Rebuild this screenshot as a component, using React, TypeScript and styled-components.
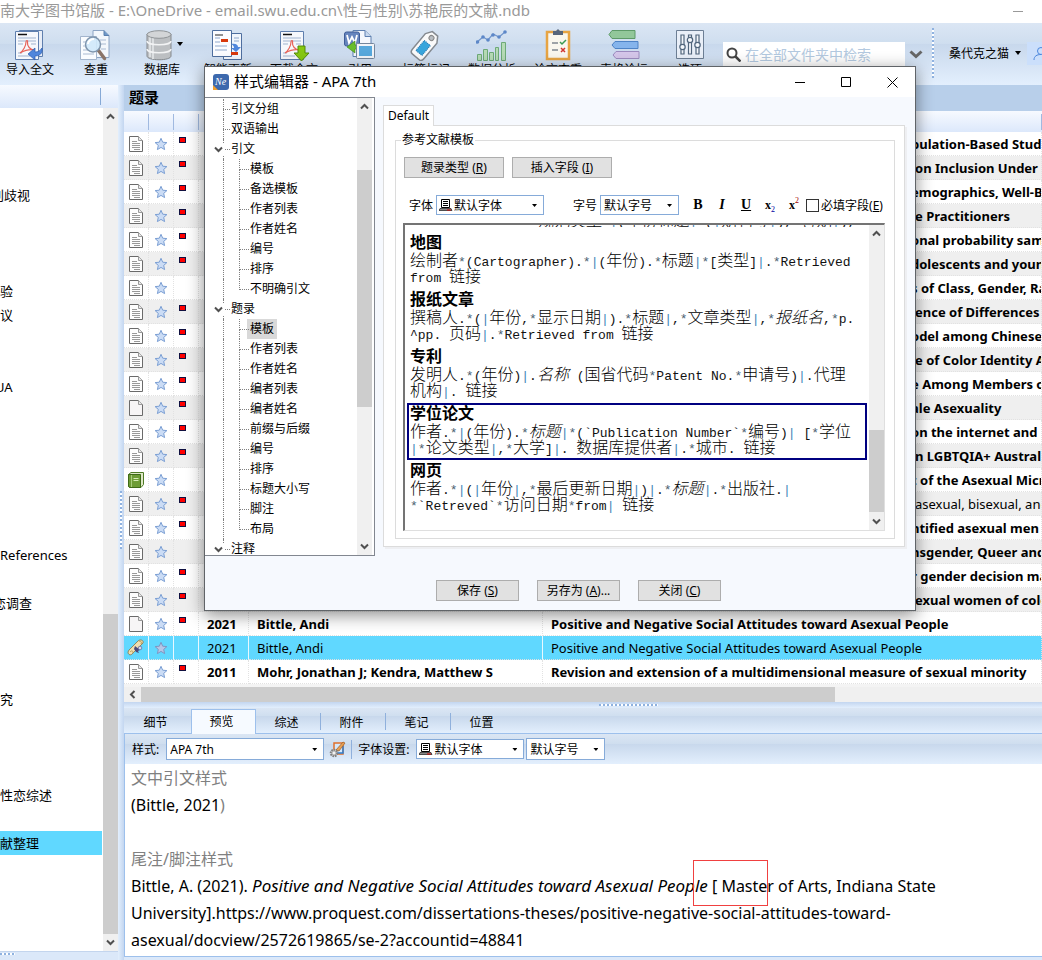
import React from "react";
import styled, { createGlobalStyle, css } from "styled-components";

const ui = `"Noto Sans", "Noto Sans CJK SC", sans-serif`;
const mono = `"Liberation Mono", "Noto Sans CJK SC", monospace`;
const barGradient =
  "linear-gradient(#dbe6f4 0, #cfdeef 33%, #c8d8ec 34%, #e3effd 100%)";
const headGradient = "linear-gradient(#f7faff, #dce8fb)";
const selected = "#60d8ff";

const GlobalStyle = createGlobalStyle`
  * { box-sizing: border-box; }
  body { margin: 0; overflow: hidden; background: #dbe8f9; font-family: ${ui}; font-size: 12px; color: #000; }
  button, select, input { font: inherit; color: inherit; margin: 0; padding: 0; }
  ul { list-style: none; margin: 0; padding: 0; }
`;

const Shell = styled.div`
  position: relative;
  display: flex;
  flex-direction: column;
  height: 100vh;
  overflow: hidden;
`;

/* ---------- window caption ---------- */

const Caption = styled.header`
  display: flex;
  flex: none;
  align-items: center;
  justify-content: space-between;
  height: 23px;
  padding-right: 18px;
  background: #fff;
  color: #999;
  font-size: 15px;
  line-height: 21px;
  white-space: nowrap;
`;

const CaptionText = styled.span`
  height: 23px;
`;

const CaptionDash = styled.button`
  width: 12px;
  height: 12px;
  border: 0;
  background: linear-gradient(#999, #999) center / 10px 1px no-repeat;
`;

/* ---------- main toolbar ---------- */

const Ribbon = styled.nav`
  display: flex;
  flex: none;
  height: 62px;
  background: ${barGradient};
`;

const RibbonGroup = styled.div`
  display: flex;
  flex: none;
  margin-left: -3px;
`;

const RibbonButton = styled.button`
  display: flex;
  flex-direction: column;
  align-items: center;
  width: 66px;
  padding-top: 6px;
  border: 0;
  background: none;
  line-height: 18px;
  white-space: nowrap;
`;

const RibbonArt = styled.span`
  position: relative;
  display: flex;
  height: 32px;
`;

const ArtArrow = styled.span`
  position: absolute;
  left: 31px;
  top: 4px;
`;

const SearchBox = styled.label`
  display: flex;
  flex: none;
  align-items: center;
  gap: 4px;
  width: 182px;
  height: 24px;
  margin: 19px 4px 0 0;
  padding: 0 3px;
  background: #fff;
`;

const SearchInput = styled.input`
  flex: 1;
  min-width: 0;
  border: 0;
  outline: 0;
  background: none;
  font-size: 14px;
  &::placeholder {
    color: #b3c9e0;
    opacity: 1;
  }
`;

const IconButton = styled.button`
  display: flex;
  align-items: center;
  justify-content: center;
  width: 16px;
  height: 24px;
  margin-top: 19px;
  border: 0;
  background: none;
`;

const DottedDivider = styled.span`
  flex: none;
  width: 2px;
  height: 50px;
  margin: 5px 15px 0 9px;
  background: repeating-linear-gradient(#8fb2e0 0 2px, #fff 2px 4px);
`;

const UserMenu = styled.button`
  display: flex;
  flex: none;
  align-items: center;
  gap: 6px;
  height: 24px;
  margin: 18px 6px 0 0;
  border: 0;
  background: none;
  white-space: nowrap;
`;

const Avatar = styled.button`
  flex: none;
  width: 24px;
  height: 23px;
  margin-top: 19px;
  padding: 3px;
  border: 0;
  background: #cbdffb;
`;

/* ---------- workspace ---------- */

const Workspace = styled.div`
  display: flex;
  flex: 1;
  min-height: 0;
`;

const Sidebar = styled.aside`
  display: flex;
  flex: none;
  flex-direction: column;
  width: 118px;
`;

const SidebarHead = styled.div`
  flex: none;
  height: 23px;
  background: linear-gradient(#86a9d6, #86a9d6) 100px 3px / 1px 17px no-repeat,
    ${headGradient};
`;

const SidebarBody = styled.div`
  display: flex;
  flex: 1;
  min-height: 0;
  background: #fff;
`;

const FolderList = styled.ul`
  flex: 1;
  padding-top: 3px;
  overflow: hidden;
`;

const Folder = styled.li<{ $clip?: number; $active?: boolean }>`
  width: 102px;
  height: 24px;
  font-size: 13px;
  line-height: 24px;
  text-indent: ${(p) => -(p.$clip ?? 0)}px;
  white-space: nowrap;
  overflow: hidden;
  background: ${(p) => (p.$active ? selected : "none")};
`;

const SidebarFoot = styled.div`
  flex: none;
  height: 9px;
  border-top: 1px solid #c3d5ee;
  background: repeating-linear-gradient(90deg, #8fb2e0 0 2px, #fff 2px 4px) 0 1px /
      15px 2px no-repeat,
    #dbe8f9;
`;

const Splitter = styled.div`
  flex: none;
  width: 6px;
  background: repeating-linear-gradient(#8fb2e0 0 2px, #fff 2px 4px) 2px 406px /
      2px 58px no-repeat,
    linear-gradient(90deg, #e3effd, #c3d6f0);
`;

/* ---------- scrollbars ---------- */

const Track = styled.div<{ $row?: boolean }>`
  display: flex;
  flex: none;
  flex-direction: ${(p) => (p.$row ? "row" : "column")};
  ${(p) => (p.$row ? "height: 15px;" : "width: 15px;")}
  background: #f0f0f0;
`;

const TrackArrow = styled.button<{ $end?: boolean }>`
  display: flex;
  flex: none;
  align-items: center;
  justify-content: center;
  width: 15px;
  height: 17px;
  border: 0;
  background: none;
  ${(p) => p.$end && "margin-top: auto;"}
`;

const SideArrow = styled(TrackArrow)`
  width: 17px;
  height: 15px;
`;

const Thumb = styled.span<{ $from: number; $size: number; $row?: boolean }>`
  flex: none;
  background: #cdcdcd;
  ${(p) =>
    p.$row
      ? css`margin-left: ${p.$from}px; width: ${p.$size}px;`
      : css`margin-top: ${p.$from}px; height: ${p.$size}px;`}
`;

/* ---------- record table ---------- */

const Main = styled.main`
  display: flex;
  flex: 1;
  flex-direction: column;
  min-width: 0;
`;

const PanelTitle = styled.h2`
  flex: none;
  height: 26px;
  margin: 0;
  padding-left: 5px;
  background: #b8cfea;
  font-size: 15px;
  font-weight: 600;
  line-height: 24px;
`;

const Records = styled.table`
  flex: none;
  width: 100%;
  table-layout: fixed;
  border-collapse: separate;
  border-spacing: 0;
  background: #fff;
  font-size: 13px;
`;

const HeadCell = styled.th<{ $w?: number }>`
  width: ${(p) => (p.$w ? `${p.$w}px` : "auto")};
  height: 21px;
  padding: 0;
  background: linear-gradient(#a0b9e0, #a0b9e0) right 3px / 1px 16px no-repeat,
    ${headGradient};
`;

const Row = styled.tr<{ $active?: boolean; $plain?: boolean }>`
  background: ${(p) => (p.$active ? selected : "#fff")};
  font-weight: ${(p) => (p.$active || p.$plain ? 400 : 700)};
  &:nth-child(even) {
    background: ${(p) => (p.$active ? selected : "#efefef")};
  }
`;

const Cell = styled.td<{ $pad?: number; $center?: boolean; $solid?: boolean }>`
  height: 24px;
  padding: 0 0 0 ${(p) => p.$pad ?? 0}px;
  border-bottom: 1px dotted #e2e2e2;
  border-right: 1px ${(p) => (p.$solid ? "solid #e8f8ff" : "dotted #e2e2e2")};
  line-height: 20px;
  text-align: ${(p) => (p.$center ? "center" : "left")};
  white-space: nowrap;
  overflow: hidden;
  svg {
    display: block;
    margin: 0 auto;
  }
`;

const Flag = styled.span`
  display: block;
  width: 7px;
  height: 6px;
  margin-bottom: 8px;
  border: 1px solid #101040;
  background: #f00;
`;

const TableFoot = styled.div`
  flex: none;
  height: 3px;
  background: #f4f4f4;
`;

const HSplitter = styled.div`
  flex: none;
  height: 6px;
  background: repeating-linear-gradient(90deg, #8fb2e0 0 2px, #fff 2px 4px) 475px
      2px / 59px 2px no-repeat,
    linear-gradient(#c3d6f0, #e3effd);
`;

/* ---------- detail pane ---------- */

const Tabs = styled.div`
  display: flex;
  flex: none;
  align-items: flex-end;
  height: 26px;
  border-bottom: 1px solid #9dc0ec;
  background: ${barGradient};
`;

const Tab = styled.button<{ $active?: boolean; $rule?: boolean }>`
  width: 65px;
  height: 23px;
  padding: 3px 4px 0 0;
  border: 0;
  background: ${(p) =>
    p.$rule
      ? "linear-gradient(#8fb0dc, #8fb0dc) right 3px / 1px 17px no-repeat"
      : "none"};
  line-height: 20px;
  &:first-child {
    width: 67px;
  }
  ${(p) =>
    p.$active &&
    css`
      height: 25px;
      margin-bottom: -1px;
      padding: 0 4px 0 0;
      border: 1px solid #9dc0ec;
      border-bottom: 0;
      background: #f6faff;
    `}
`;

const Options = styled.div`
  display: flex;
  flex: none;
  align-items: center;
  height: 30px;
  padding-left: 7px;
  border-left: 1px solid #9dc0ec;
  background: ${barGradient};
  white-space: nowrap;
`;

const OptionLabel = styled.label`
  margin-right: 7px;
`;

const StyleButton = styled.button`
  display: flex;
  margin: 0 2px 0 5px;
  border: 0;
  background: none;
`;

const ComboGap = styled.span`
  flex: none;
  width: 2px;
`;

const Rule = styled.span`
  width: 1px;
  height: 19px;
  margin: 0 6px 0 3px;
  background: #8fb0dc;
`;

const Preview = styled.article`
  position: relative;
  flex: 1;
  padding: 1px 0 0 6px;
  border-left: 1px solid #9dc0ec;
  border-bottom: 1px solid #9dc0ec;
  background: #fff;
  font-size: 16px;
  line-height: 27px;
  white-space: nowrap;
`;

const PreviewLine = styled.p<{ $muted?: boolean; $above?: boolean }>`
  margin: ${(p) => (p.$above ? 27 : 0)}px 0 0;
  color: ${(p) => (p.$muted ? "#808080" : "#000")};
`;

const WorkTitle = styled.em`
  font-size: 17px;
  line-height: 0;
`;

const Muted = styled.span`
  color: #808080;
`;

const Marker = styled.span`
  position: absolute;
  left: 568px;
  top: 96px;
  width: 75px;
  height: 46px;
  border: 1px solid #f04040;
`;

const StatusEdge = styled.footer`
  flex: none;
  height: 3px;
  background: #dbe8f9;
`;

/* ---------- combo boxes ---------- */

const Combo = styled.span<{ $w: number; $h: number }>`
  position: relative;
  display: inline-flex;
  flex: none;
  align-items: center;
  width: ${(p) => p.$w}px;
  height: ${(p) => p.$h}px;
  border: 1px solid #86abd9;
  background: #fff;
`;

const ComboSelect = styled.select<{ $icon?: boolean }>`
  width: 100%;
  height: 100%;
  padding-left: ${(p) => (p.$icon ? 17 : 3)}px;
  border: 0;
  outline: 0;
  appearance: none;
  background: none;
`;

const ComboIcon = styled.span`
  position: absolute;
  left: 2px;
  top: 3px;
  display: flex;
`;

const ComboArrow = styled.span`
  position: absolute;
  right: 6px;
  top: 50%;
  width: 5px;
  height: 3px;
  margin-top: -1px;
  background: #000;
  clip-path: polygon(0 0, 100% 0, 50% 100%);
  pointer-events: none;
`;

/* ---------- dialog ---------- */

const Dialog = styled.section`
  position: absolute;
  left: 204px;
  top: 66px;
  display: flex;
  flex-direction: column;
  width: 712px;
  height: 545px;
  border: 1px solid #606468;
  background: #f6f9fe;
  box-shadow: 0 4px 16px rgba(0, 0, 0, 0.45);
`;

const DialogHead = styled.header`
  display: flex;
  flex: none;
  align-items: center;
  height: 30px;
  padding: 0 17px 0 8px;
  background: #fff;
`;

const DialogTitle = styled.h1`
  flex: 1;
  height: 22px;
  margin: 0 0 0 5px;
  font-size: 15px;
  font-weight: 400;
  line-height: 20px;
`;

const WindowButton = styled.button`
  display: flex;
  align-items: center;
  justify-content: center;
  width: 12px;
  height: 12px;
  margin-left: 34px;
  border: 0;
  background: none;
`;

const DialogBody = styled.div`
  display: flex;
  flex: none;
`;

const TreePane = styled.div`
  display: flex;
  flex: none;
  width: 170px;
  height: 459px;
  padding-right: 2px;
  border: 1px solid #828790;
  border-left: 0;
  background: #fff;
  overflow: hidden;
`;

const Tree = styled.ul`
  flex: 1;
  padding-top: 1px;
`;

const TreeRow = styled.li<{ $child?: boolean }>`
  position: relative;
  display: flex;
  align-items: center;
  height: 20px;
  padding-left: ${(p) => (p.$child ? 42 : 23)}px;
  white-space: nowrap;
  &::before {
    content: "";
    position: absolute;
    left: 18px;
    top: 0;
    bottom: 0;
    border-left: 1px dotted #808080;
  }
  &::after {
    content: "";
    position: absolute;
    left: ${(p) => (p.$child ? 34 : 18)}px;
    top: 0;
    width: ${(p) => (p.$child ? 9 : 7)}px;
    height: 10px;
    border-bottom: 1px dotted #808080;
    border-left: ${(p) => (p.$child ? "1px dotted #808080" : "0")};
  }
`;

const TreeStem = styled.span`
  position: absolute;
  left: 34px;
  top: 10px;
  bottom: 0;
  border-left: 1px dotted #808080;
`;

const Expander = styled.button`
  position: absolute;
  left: 7px;
  top: 5px;
  z-index: 1;
  display: flex;
  padding: 1px 1px 1px 2px;
  border: 0;
  background: #fff;
`;

const TreeLabel = styled.span<{ $active?: boolean }>`
  padding: 0 3px;
  line-height: 20px;
  background: ${(p) => (p.$active ? "#d9d9d9" : "none")};
`;

const EditorSide = styled.div`
  flex: 1;
  min-width: 0;
  padding: 8px 10px 0 8px;
`;

const PageTab = styled.button`
  position: relative;
  z-index: 1;
  display: block;
  width: 51px;
  height: 21px;
  margin-bottom: -1px;
  border: 1px solid #dcdcdc;
  border-bottom: 0;
  background: #fff;
  line-height: 18px;
`;

const Page = styled.div`
  height: 422px;
  padding: 8px 9px 8px 11px;
  border: 1px solid #dcdcdc;
  background: #fff;
  box-shadow: 2px 2px 0 #eeeff2;
`;

const Group = styled.fieldset`
  min-width: 0;
  height: 405px;
  margin: 0;
  padding: 0 9px 0 8px;
  border: 1px solid #dcdcdc;
`;

const Legend = styled.legend`
  height: 12px;
  margin-left: -3px;
  padding: 0 1px;
  line-height: 12px;
`;

const ButtonRow = styled.div`
  display: flex;
  gap: 8px;
  padding-top: 11px;
`;

const PushButton = styled.button<{ $w: number }>`
  width: ${(p) => p.$w}px;
  height: 21px;
  border: 1px solid #adadad;
  background: #e1e1e1;
  line-height: 18px;
  white-space: nowrap;
`;

const FormatRow = styled.div`
  display: flex;
  align-items: center;
  height: 20px;
  margin: 17px 0 8px;
  padding-left: 5px;
  white-space: nowrap;
`;

const FormatLabel = styled.label<{ $apart?: boolean }>`
  margin: 0 3px 0 ${(p) => (p.$apart ? 29 : 0)}px;
`;

const FormatButton = styled.button<{ $small?: boolean }>`
  width: 24px;
  height: 18px;
  border: 0;
  background: none;
  font-family: "Liberation Serif", serif;
  font-size: ${(p) => (p.$small ? 12 : 14)}px;
  font-weight: 700;
  line-height: 16px;
`;

const FormatGroup = styled.span`
  display: flex;
  margin-left: 7px;
`;

const Script = styled.span<{ $sup?: boolean }>`
  font-size: 8px;
  font-weight: 400;
  color: ${(p) => (p.$sup ? "#a00000" : "#0000a0")};
  vertical-align: ${(p) => (p.$sup ? "6px" : "-3px")};
  line-height: 0;
`;

const CheckLabel = styled.label`
  display: flex;
  align-items: center;
  gap: 2px;
`;

const Check = styled.input`
  width: 13px;
  height: 13px;
  border: 1px solid #333;
  background: #fff;
  appearance: none;
`;

const Editor = styled.div`
  display: flex;
  height: 308px;
  margin-left: -1px;
  border: 1px solid #dfdfdf;
  border-top: 2px solid #747474;
  border-left: 2px solid #747474;
  background: #fff;
  overflow: hidden;
`;

const EditorText = styled.div`
  flex: 1;
  min-width: 0;
  margin-top: -14px;
  padding-left: 2px;
  font-family: "Noto Sans CJK SC", sans-serif;
  font-size: 16px;
  font-weight: 300;
  line-height: 16px;
  white-space: nowrap;
`;

const Overflowed = styled.p`
  height: 16px;
  margin: 0 0 5px;
  padding-left: 131px;
  overflow: hidden;
`;

const Block = styled.div<{ $active?: boolean }>`
  width: 460px;
  height: 57px;
  padding-left: 1px;
  border: 2px solid ${(p) => (p.$active ? "#000080" : "transparent")};
`;

const BlockTitle = styled.h3`
  height: 14px;
  margin: 0 0 3px;
  font-size: 16px;
  line-height: 14px;
`;

const BlockLine = styled.p`
  height: 16px;
  margin: 0;
`;

const Latin = styled.span`
  font-family: ${mono};
  font-size: 13px;
  font-weight: 400;
  line-height: 0;
  color: #111;
  white-space: pre;
`;

const Token = styled(Latin)<{ $bar?: boolean }>`
  color: ${(p) => (p.$bar ? "#3f84b8" : "#4d6272")};
`;

const DialogFoot = styled.footer`
  display: flex;
  gap: 18px;
  padding: 24px 0 0 231px;
`;

/* ---------- drawings ---------- */

const Chevron = ({ dir, size = 9 }: { dir: "up" | "down" | "left"; size?: number }) => (
  <svg width={size} height={size} viewBox="0 0 9 9" fill="none" stroke="#505050" strokeWidth="2">
    <path d={dir === "up" ? "M1 6.5 4.5 3 8 6.5" : dir === "down" ? "M1 2.5 4.5 6 8 2.5" : "M6.5 1 3 4.5 6.5 8"} />
  </svg>
);

const Caret = () => (
  <svg width="6" height="4" viewBox="0 0 6 4">
    <path d="M0 0h6L3 4z" />
  </svg>
);

const PdfSheet = ({ x = 0 }: { x?: number }) => (
  <g transform={`translate(${x} 0)`}>
    <path d="M.5 1.500h23v28h-23z" fill="#f6f8fc" stroke="#5f7fae" />
    <path d="M3 4.500h9" stroke="#111" strokeWidth="1.500" />
    <path d="M3 8h18M3 11h18M3 14h5M16 14h5M3 26h12M3 23h4" stroke="#9fb3cf" />
    <path d="M5 23c3-2 6-7 6-11 0-2 2-2 1.500 0-.5 4 2.500 8 7 8-4-1-9 0-14.500 3z" fill="none" stroke="#e8645a" strokeWidth="1.200" />
  </g>
);

const art: Record<string, React.ReactNode> = {
  importText: (
    <>
      <path d="M5.500.500h23v26h-23z" fill="#e9eef7" stroke="#5f7fae" />
      <PdfSheet x={1} />
      <path d="M28 18c1 6-3 8-7 8v4l-7-6 7-6v4c3 0 5-1 7-4z" fill="#4f86dc" stroke="#2c5db0" strokeWidth=".7" />
    </>
  ),
  duplicate: (
    <>
      <path d="M13 .5h11l5 5v22H13z" fill="#f3f7fc" stroke="#8ca4c4" />
      <path d="M24 .5v5h5" fill="#6f98c8" stroke="#5b80ae" />
      <path d="M.5 6.500h16v23H.5z" fill="#fafcff" stroke="#a3b5cd" />
      <path d="M3 12h5M3 16h4M3 20h6M3 24h11M21 14h5M21 19h5M20 10h6" stroke="#a9bad2" />
      <path d="m18.500 20.500 6 8" stroke="#8a7468" strokeWidth="3.500" strokeLinecap="round" />
      <circle cx="13" cy="14.500" r="7.500" fill="#cfe8fb" fillOpacity=".9" stroke="#7f95ad" strokeWidth="1.500" />
      <path d="M8 14c0-3 3-5 6-5" stroke="#fff" strokeWidth="2" fill="none" />
    </>
  ),
  database: (
    <>
      <path d="M1 4v22c0 5 24 5 24 0V4z" fill="#bcbfc2" stroke="#85898d" />
      <path d="M4 5v22M7 6v23" stroke="#dcdfe1" strokeWidth="2" />
      <ellipse cx="13" cy="4.500" rx="12" ry="3.800" fill="#d3d5d7" stroke="#909497" />
      <path d="M1 11c0 5 24 5 24 0M1 19c0 5 24 5 24 0" fill="none" stroke="#f2f3f4" strokeWidth="1.500" />
    </>
  ),
  refresh: (
    <>
      <path d="M11.500 3.500h18v26h-18z" fill="#f2f6fc" stroke="#4f6f9f" />
      <path d="M.5.500h19v26H.5z" fill="#fbfcff" stroke="#4f6f9f" />
      <path d="M3 5h8" stroke="#222" />
      <path d="M3 8h5M3 12h5M3 16h12M3 20h12M22 8h5M22 11h5" stroke="#8fa8cc" />
      <path d="M9 9h7v3H9zM19 22h7v3h-7z" fill="#d8380c" />
      <path d="M19 14c5-1 7 1 7 3h3l-5 5-5-4h3c0-2-1-3-3-4z" fill="#4f86dc" />
    </>
  ),
  download: (
    <>
      <PdfSheet x={2} />
      <path d="M20 16h7v7h4l-7.500 8L16 23h4z" fill="#86c811" stroke="#528a08" />
    </>
  ),
  cite: (
    <>
      <path d="M9 .5h12l6 6v20H9z" fill="#f4f8fd" stroke="#5e80b0" />
      <path d="M21 .5v6h6" fill="#c6d8ee" stroke="#5e80b0" />
      <rect x=".5" y="2" width="15" height="14" rx="2" fill="#6685bd" stroke="#3f5d97" />
      <path d="m3 5 2 8 3-6 3 6 2-8" fill="none" stroke="#fff" strokeWidth="1.800" />
      <path d="M3 17l8-6v4c4 0 6 3 6 9-2-4-4-5-6-5v4z" fill="#68bd2c" stroke="#3e8713" strokeWidth=".6" />
      <rect x="12.500" y="13.500" width="18" height="15" rx="1" fill="#f1f4f8" stroke="#74869c" />
      <path d="M15 16h13v10H15z" fill="#57a8dc" />
    </>
  ),
  tag: (
    <g transform="rotate(40 15 15)">
      <path d="m8 6 4-6h7l4 6v20c0 3-1 4-3 4h-9c-2 0-3-1-3-4z" fill="#fafafa" stroke="#858a90" strokeWidth="1.500" />
      <circle cx="15.500" cy="5.500" r="2.500" fill="#b8bdc2" stroke="#888" />
      <path d="M11.500 12h8v13h-8z" fill="#38a5dc" stroke="#1f6faa" strokeDasharray="1 1" />
    </g>
  ),
  analysis: (
    <>
      <g fill="#b6dbb6" stroke="#6eaa78">
        <path d="M1.500 24.500h4v6h-4zM7.500 19.500h4v11h-4zM13.500 22.500h4v8h-4zM19.500 17.500h3v13h-3zM25.500 12.500h4v18h-4z" />
      </g>
      <path d="m1 12 6-5 5 3 5-6 6 3 6-5" fill="none" stroke="#6f95cc" strokeWidth="1.200" />
      <g fill="#5c87c8">
        <circle cx="1.500" cy="12" r="1.800" /><circle cx="7" cy="7" r="1.800" /><circle cx="12" cy="10" r="1.800" />
        <circle cx="17" cy="5" r="1.800" /><circle cx="23" cy="7" r="1.800" /><circle cx="29" cy="2" r="1.800" />
      </g>
    </>
  ),
  check: (
    <>
      <path d="M5 2h22v27H5z" fill="#f9f6ee" stroke="#e7a443" strokeWidth="2.500" />
      <path d="M11 1h3l2-2 2 2h3v4H11z" fill="#57657b" />
      <path d="M10 13h6M10 20h6" stroke="#7f8790" strokeWidth="1.500" />
      <path d="m18 12 2 2 4-4" fill="none" stroke="#3a9a50" strokeWidth="1.500" />
      <path d="m19 18 4 4m0-4-4 4" stroke="#d23530" strokeWidth="1.500" />
    </>
  ),
  forum: (
    <>
      <path d="M4 .5h23v8H4L1 4.500z" fill="#92c79a" stroke="#5d9a68" />
      <path d="M7 11.500h23v7H7L4 15z" fill="#85b4ec" stroke="#4e83c6" />
      <path d="M8 21.500h23v7H8L5 25z" fill="#d5c7ea" stroke="#9c8cc0" />
    </>
  ),
  options: (
    <>
      <path d="M2.500.500h27v28h-27z" fill="#e9eff8" stroke="#6d7f95" />
      <g fill="#f4f7fb" stroke="#50657c" strokeWidth="1.200">
        <path d="M7 5h3v19H7zM14.500 5h3v19h-3zM22 5h3v19h-3z" />
        <circle cx="8.500" cy="17" r="2.700" /><circle cx="16" cy="10" r="2.700" /><circle cx="23.500" cy="15" r="2.700" />
      </g>
    </>
  ),
};

const PageIcon = ({ blank }: { blank?: boolean }) => (
  <svg width="14" height="16" viewBox="0 0 14 16">
    <path d="M.5.500h9l4 4v11H.5z" fill={blank ? "#f7f5f6" : "#fdfdfd"} stroke="#6a6a6a" />
    <path d="M9.500.500v4h4" fill="#e8e8e8" stroke="#9a9a9a" />
    {!blank && <path d="M3 5.500h5M3 7.500h8M3 9.500h8M3 11.500h8M5 13.500h6" stroke="#999" />}
  </svg>
);

const BookIcon = () => (
  <svg width="16" height="16" viewBox="0 0 16 16">
    <path d="M3 .5h12.500v12L13 15.500H1.500L.5 14V2.500z" fill="#dfe8c8" stroke="#4e7a25" />
    <path d="M.5 2.500h12v13H2l-1.500-1z" fill="#6d9c35" stroke="#3f6a18" />
    <path d="M3.500 3v12" stroke="#a9cc7c" />
    <path d="M5.500 6.500h5M5.500 8.500h5" stroke="#d6ebb6" />
  </svg>
);

const ScrollIcon = () => (
  <svg width="18" height="18" viewBox="0 0 18 18">
    <path d="M2 11 11 2c2-2 6-1 5 2l-2 2-8 8c-2 3-5 2-5-1z" fill="#f0deb0" stroke="#8a7340" strokeWidth=".8" />
    <path d="M3 13c2-2 3-1 3 1M12 2c2 0 3 1 2 3" stroke="#b59a58" fill="none" />
    <path d="m8 7 5 4-2 1 1 2-3-1-2-3z" fill="#4b4a7a" />
    <circle cx="13" cy="9" r="1.800" fill="#d8d8ee" stroke="#55558a" strokeWidth=".6" />
  </svg>
);

const Star = ({ muted }: { muted?: boolean }) => (
  <svg width="14" height="14" viewBox="0 0 14 14">
    <path
      d="m7 1.300 1.700 3.900 4.200.4-3.200 2.800.9 4.200L7 10.400l-3.600 2.200.9-4.200L1.100 5.600l4.200-.4z"
      fill={muted ? "#b6c6e6" : "#cbdcf5"}
      stroke={muted ? "#7f95c2" : "#7b9fd4"}
      strokeLinejoin="round"
    />
  </svg>
);

const FontIcon = () => (
  <svg width="14" height="13" viewBox="0 0 14 13">
    <path d="M2.500.500h8v8h-8z" fill="#fff" stroke="#000" />
    <path d="M4 2.500h5M4 4.500h5M4 6.500h5" stroke="#000" />
    <path d="M1 9.500h11l1 2H0z" fill="#888" stroke="#000" strokeWidth=".6" />
    <path d="M8 11h4" stroke="#d00" />
  </svg>
);

const StyleEditIcon = () => (
  <svg width="17" height="17" viewBox="0 0 17 17">
    <path d="M5 2h9v11H5z" fill="#d5e8fb" stroke="#e0702c" strokeWidth="1.500" />
    <path d="M8 12h6V5" fill="none" stroke="#2f7fd0" strokeWidth="1.500" />
    <path d="m7 9 7-8 2 1-6 8z" fill="#e8a055" stroke="#9c5a20" strokeWidth=".7" />
    <circle cx="5" cy="12" r="3.200" fill="#e4e4e4" stroke="#808080" strokeWidth="2.200" strokeDasharray="1.600 .8" />
    <circle cx="5" cy="12" r="2.400" fill="#d0d0d0" stroke="#808080" strokeWidth=".6" />
    <circle cx="5" cy="12" r="1" fill="#fff" />
  </svg>
);

const AppLogo = () => (
  <svg width="16" height="16" viewBox="0 0 16 16">
    <rect width="16" height="16" rx="3" fill="#3d69ad" />
    <path d="M0 11v5h5z" fill="#f0a030" />
    <text x="2" y="11" fontFamily="Liberation Serif, serif" fontStyle="italic" fontSize="10" fill="#fff">Ne</text>
  </svg>
);

/* ---------- data ---------- */

const tools: [string, string][] = [
  ["importText", "导入全文"],
  ["duplicate", "查重"],
  ["database", "数据库"],
  ["refresh", "智能更新"],
  ["download", "下载全文"],
  ["cite", "引用"],
  ["tag", "标签标记"],
  ["analysis", "数据分析"],
  ["check", "论文查重"],
  ["forum", "表格论坛"],
  ["options", "选项"],
];

const folders: Record<number, { text: string; clip?: number; active?: boolean }> = {
  3: { text: "别歧视", clip: 9 },
  7: { text: "验" },
  8: { text: "议" },
  11: { text: "UA", clip: 5 },
  18: { text: "References" },
  20: { text: "恋调查", clip: 7 },
  24: { text: "究" },
  28: { text: "性恋综述" },
  30: { text: "献整理", active: true },
};

type Rec = {
  title: string;
  lead?: number;
  year?: string;
  author?: string;
  icon?: "blank" | "book" | "scroll";
  flag?: boolean;
  plain?: boolean;
  active?: boolean;
};

const records: Rec[] = [
  { title: "pulation-Based Study", lead: 368 },
  { title: "on Inclusion Under", lead: 372 },
  { title: "emographics, Well-Being", lead: 368 },
  { title: "e Practitioners", lead: 372 },
  { title: "onal probability sample", lead: 368 },
  { title: "dolescents and young", lead: 368 },
  { title: "s of Class, Gender, Race", lead: 368, flag: false },
  { title: "ence of Differences", lead: 372 },
  { title: "odel among Chinese", lead: 368 },
  { title: "e of Color Identity And", lead: 372 },
  { title: "e Among Members of", lead: 368 },
  { title: "ale Asexuality", lead: 368, icon: "blank" },
  { title: "on the internet and mobile", lead: 368 },
  { title: "in LGBTQIA+ Australia", lead: 368 },
  { title: "t of the Asexual Micro", lead: 368, icon: "book", flag: false },
  { title: "asexual, bisexual, and", lead: 372, plain: true },
  { title: "ntified asexual men", lead: 368 },
  { title: "nsgender, Queer and", lead: 368, flag: false },
  { title: "r gender decision making", lead: 368 },
  { title: "exual women of color", lead: 372 },
  { title: "Positive and Negative Social Attitudes toward Asexual People", year: "2021", author: "Bittle, Andi", icon: "blank" },
  { title: "Positive and Negative Social Attitudes toward Asexual People", year: "2021", author: "Bittle, Andi", icon: "scroll", flag: false, active: true },
  { title: "Revision and extension of a multidimensional measure of sexual minority", year: "2011", author: "Mohr, Jonathan J; Kendra, Matthew S" },
];

const tree: { text: string; child?: boolean; open?: boolean; active?: boolean; last?: boolean }[] = [
  { text: "引文分组" },
  { text: "双语输出" },
  { text: "引文", open: true },
  { text: "模板", child: true },
  { text: "备选模板", child: true },
  { text: "作者列表", child: true },
  { text: "作者姓名", child: true },
  { text: "编号", child: true },
  { text: "排序", child: true },
  { text: "不明确引文", child: true, last: true },
  { text: "题录", open: true },
  { text: "模板", child: true, active: true },
  { text: "作者列表", child: true },
  { text: "作者姓名", child: true },
  { text: "编者列表", child: true },
  { text: "编者姓名", child: true },
  { text: "前缀与后缀", child: true },
  { text: "编号", child: true },
  { text: "排序", child: true },
  { text: "标题大小写", child: true },
  { text: "脚注", child: true },
  { text: "布局", child: true, last: true },
  { text: "注释", open: true },
];

/* Underscores mark italic fields in a template line. */
const templates: { name: string; lines: string[]; active?: boolean }[] = [
  { name: "地图", lines: ["绘制者*(Cartographer).*|(年份).*标题|*[类型]|.*Retrieved", "from 链接"] },
  { name: "报纸文章", lines: ["撰稿人.*(|年份,*显示日期|).*标题|,*文章类型|,*_报纸名_,*p.", "^pp. 页码|.*Retrieved from 链接"] },
  { name: "专利", lines: ["发明人.*(年份)|._名称_ (国省代码*Patent No.*申请号)|.代理", "机构|. 链接"] },
  { name: "学位论文", active: true, lines: ["作者.*|(年份).*_标题_|*(`Publication Number`*编号)| [*学位", "|*论文类型|,*大学]|. 数据库提供者|.*城市. 链接"] },
  { name: "网页", lines: ["作者.*|(|年份|,*最后更新日期|)|.*_标题_|.*出版社.|", "*`Retreved`*访问日期*from| 链接"] },
];

const TemplateText = ({ text }: { text: string }) => (
  <>
    {text
      .split(/(_[^_]+_|[|*]|[\x20-\x29\x2b-\x5e\x60-\x7b\x7d]+)/)
      .filter(Boolean)
      .map((part, i) => {
        if (part[0] === "_") return <em key={i}>{part.slice(1, -1)}</em>;
        if (part === "|" || part === "*") return <Token key={i} $bar={part === "|"}>{part}</Token>;
        if (part.charCodeAt(0) < 128) return <Latin key={i}>{part}</Latin>;
        return <React.Fragment key={i}>{part}</React.Fragment>;
      })}
  </>
);

const Select = ({ w, h = 20, label, id, icon }: { w: number; h?: number; label: string; id: string; icon?: boolean }) => (
  <Combo $w={w} $h={h}>
    {icon && <ComboIcon><FontIcon /></ComboIcon>}
    <ComboSelect id={id} $icon={icon}>
      <option>{label}</option>
    </ComboSelect>
    <ComboArrow />
  </Combo>
);

const RecordIcon = ({ kind }: { kind?: Rec["icon"] }) =>
  kind === "book" ? <BookIcon /> : kind === "scroll" ? <ScrollIcon /> : <PageIcon blank={kind === "blank"} />;

const StyleEditor = () => (
  <Dialog role="dialog" aria-label="样式编辑器 - APA 7th">
    <DialogHead>
      <AppLogo />
      <DialogTitle>样式编辑器 - APA 7th</DialogTitle>
      <WindowButton aria-label="最小化">
        <svg width="11" height="11" viewBox="0 0 11 11"><path d="M0 5.500h10" stroke="#000" /></svg>
      </WindowButton>
      <WindowButton aria-label="最大化">
        <svg width="11" height="11" viewBox="0 0 11 11"><path d="M.5.500h9v9h-9z" fill="none" stroke="#000" /></svg>
      </WindowButton>
      <WindowButton aria-label="关闭窗口">
        <svg width="11" height="11" viewBox="0 0 11 11"><path d="m.5.500 10 10m0-10-10 10" stroke="#000" /></svg>
      </WindowButton>
    </DialogHead>
    <DialogBody>
      <TreePane>
        <Tree>
          {tree.map((n, i) => (
            <TreeRow key={i} $child={n.child}>
              {n.open && <Expander aria-label={n.text}><Chevron dir="down" /></Expander>}
              {n.child && !n.last && <TreeStem />}
              <TreeLabel $active={n.active}>{n.text}</TreeLabel>
            </TreeRow>
          ))}
        </Tree>
        <Track>
          <TrackArrow aria-label="向上滚动"><Chevron dir="up" /></TrackArrow>
          <Thumb $from={55} $size={237} />
          <TrackArrow $end aria-label="向下滚动"><Chevron dir="down" /></TrackArrow>
        </Track>
      </TreePane>
      <EditorSide>
        <PageTab>Default</PageTab>
        <Page>
          <Group>
            <Legend>参考文献模板</Legend>
            <ButtonRow>
              <PushButton $w={100}>题录类型 (<u>R</u>)</PushButton>
              <PushButton $w={100}>插入字段 (<u>I</u>)</PushButton>
            </ButtonRow>
            <FormatRow>
              <FormatLabel htmlFor="tpl-font">字体</FormatLabel>
              <Select id="tpl-font" w={108} label="默认字体" icon />
              <FormatLabel $apart htmlFor="tpl-size">字号</FormatLabel>
              <Select id="tpl-size" w={79} label="默认字号" />
              <FormatGroup>
                <FormatButton>B</FormatButton>
                <FormatButton><i>I</i></FormatButton>
                <FormatButton><u>U</u></FormatButton>
                <FormatButton $small>x<Script>2</Script></FormatButton>
                <FormatButton $small>x<Script $sup>2</Script></FormatButton>
              </FormatGroup>
              <CheckLabel>
                <Check type="checkbox" />
                <span>必填字段(<u>E</u>)</span>
              </CheckLabel>
            </FormatRow>
            <Editor>
              <EditorText>
                <Overflowed><TemplateText text="规范类型*|(年份标题|*(|期刊号|),*卷期|),*一页号|" /></Overflowed>
                {templates.map((t) => (
                  <Block key={t.name} $active={t.active}>
                    <BlockTitle>{t.name}</BlockTitle>
                    {t.lines.map((l) => (
                      <BlockLine key={l}><TemplateText text={l} /></BlockLine>
                    ))}
                  </Block>
                ))}
              </EditorText>
              <Track>
                <TrackArrow aria-label="向上滚动"><Chevron dir="up" /></TrackArrow>
                <Thumb $from={188} $size={82} />
                <TrackArrow $end aria-label="向下滚动"><Chevron dir="down" /></TrackArrow>
              </Track>
            </Editor>
          </Group>
        </Page>
      </EditorSide>
    </DialogBody>
    <DialogFoot>
      <PushButton $w={83}>保存 (<u>S</u>)</PushButton>
      <PushButton $w={83}>另存为 (<u>A</u>)...</PushButton>
      <PushButton $w={83}>关闭 (<u>C</u>)</PushButton>
    </DialogFoot>
  </Dialog>
);

export default function App() {
  return (
    <Shell>
      <GlobalStyle />
      <Caption>
        <CaptionText>南大学图书馆版 - E:\OneDrive - email.swu.edu.cn\性与性别\苏艳辰的文献.ndb</CaptionText>
        <CaptionDash aria-label="最小化" />
      </Caption>
      <Ribbon>
        <RibbonGroup>
          {tools.map(([id, label]) => (
            <RibbonButton key={id}>
              <RibbonArt>
                <svg width="32" height="32" viewBox="0 -1 32 32">{art[id]}</svg>
                {id === "database" && <ArtArrow><Caret /></ArtArrow>}
              </RibbonArt>
              {label}
            </RibbonButton>
          ))}
        </RibbonGroup>
        <SearchBox>
          <svg width="15" height="15" viewBox="0 0 15 15" fill="none" stroke="#444">
            <circle cx="6" cy="6" r="4.500" strokeWidth="2" />
            <path d="m9.500 9.500 5 5" strokeWidth="2.500" />
          </svg>
          <SearchInput placeholder="在全部文件夹中检索" aria-label="检索" />
        </SearchBox>
        <IconButton aria-label="展开检索">
          <svg width="14" height="9" viewBox="0 0 14 9" fill="none" stroke="#666" strokeWidth="3">
            <path d="m1.500 1.500 5.500 5 5.500-5" />
          </svg>
        </IconButton>
        <DottedDivider />
        <UserMenu>桑代克之猫 <Caret /></UserMenu>
        <Avatar aria-label="用户">
          <svg width="16" height="16" viewBox="0 0 16 16" fill="none" stroke="#4a86dd">
            <circle cx="10" cy="6" r="3.500" />
            <path d="M3 15c0-4 3-5.500 7-5.500" />
          </svg>
        </Avatar>
      </Ribbon>
      <Workspace>
        <Sidebar>
          <SidebarHead />
          <SidebarBody>
            <FolderList>
              {Array.from({ length: 34 }, (_, i) => (
                <Folder key={i} $clip={folders[i]?.clip} $active={folders[i]?.active}>
                  {folders[i]?.text}
                </Folder>
              ))}
            </FolderList>
            <Track>
              <TrackArrow aria-label="向上滚动"><Chevron dir="up" /></TrackArrow>
              <Thumb $from={489} $size={320} />
              <TrackArrow $end aria-label="向下滚动"><Chevron dir="down" /></TrackArrow>
            </Track>
          </SidebarBody>
          <SidebarFoot />
        </Sidebar>
        <Splitter />
        <Main>
          <PanelTitle>题录</PanelTitle>
          <Records>
            <thead>
              <tr>
                <HeadCell $w={25} /><HeadCell $w={25} /><HeadCell $w={25} />
                <HeadCell $w={50} /><HeadCell $w={294} /><HeadCell />
              </tr>
            </thead>
            <tbody>
              {records.map((r, i) => (
                <Row key={i} $active={r.active} $plain={r.plain}>
                  <Cell $center $solid={r.active}><RecordIcon kind={r.icon} /></Cell>
                  <Cell $center $solid={r.active}><Star muted={r.active} /></Cell>
                  <Cell $pad={5} $solid={r.active}>{r.flag !== false && <Flag />}</Cell>
                  <Cell $pad={8} $solid={r.active}>{r.year}</Cell>
                  <Cell $pad={8} $solid={r.active}>{r.author}</Cell>
                  <Cell $pad={r.lead ?? 8}>{r.title}</Cell>
                </Row>
              ))}
            </tbody>
          </Records>
          <TableFoot />
          <Track $row>
            <SideArrow aria-label="向左滚动"><Chevron dir="left" /></SideArrow>
            <Thumb $row $from={0} $size={694} />
          </Track>
          <HSplitter />
          <Tabs>
            <Tab>细节</Tab>
            <Tab $active>预览</Tab>
            <Tab $rule>综述</Tab>
            <Tab $rule>附件</Tab>
            <Tab $rule>笔记</Tab>
            <Tab>位置</Tab>
          </Tabs>
          <Options>
            <OptionLabel htmlFor="style">样式:</OptionLabel>
            <Select id="style" w={158} h={22} label="APA 7th" />
            <StyleButton aria-label="编辑样式"><StyleEditIcon /></StyleButton>
            <Rule />
            <OptionLabel htmlFor="font">字体设置:</OptionLabel>
            <Select id="font" w={108} label="默认字体" icon />
            <ComboGap />
            <Select id="size" w={79} h={22} label="默认字号" />
          </Options>
          <Preview>
            <PreviewLine $muted>文中引文样式</PreviewLine>
            <PreviewLine>(Bittle, 2021<Muted>)</Muted></PreviewLine>
            <PreviewLine $muted $above>尾注/脚注样式</PreviewLine>
            <PreviewLine>
              Bittle, A. (2021). <WorkTitle>Positive and Negative Social Attitudes toward Asexual People</WorkTitle> [ Master of Arts, Indiana State
              <br />
              University].https://www.proquest.com/dissertations-theses/positive-negative-social-attitudes-toward-
              <br />
              asexual/docview/2572619865/se-2?accountid=48841
            </PreviewLine>
            <Marker />
          </Preview>
          <StatusEdge />
        </Main>
      </Workspace>
      <StyleEditor />
    </Shell>
  );
}
